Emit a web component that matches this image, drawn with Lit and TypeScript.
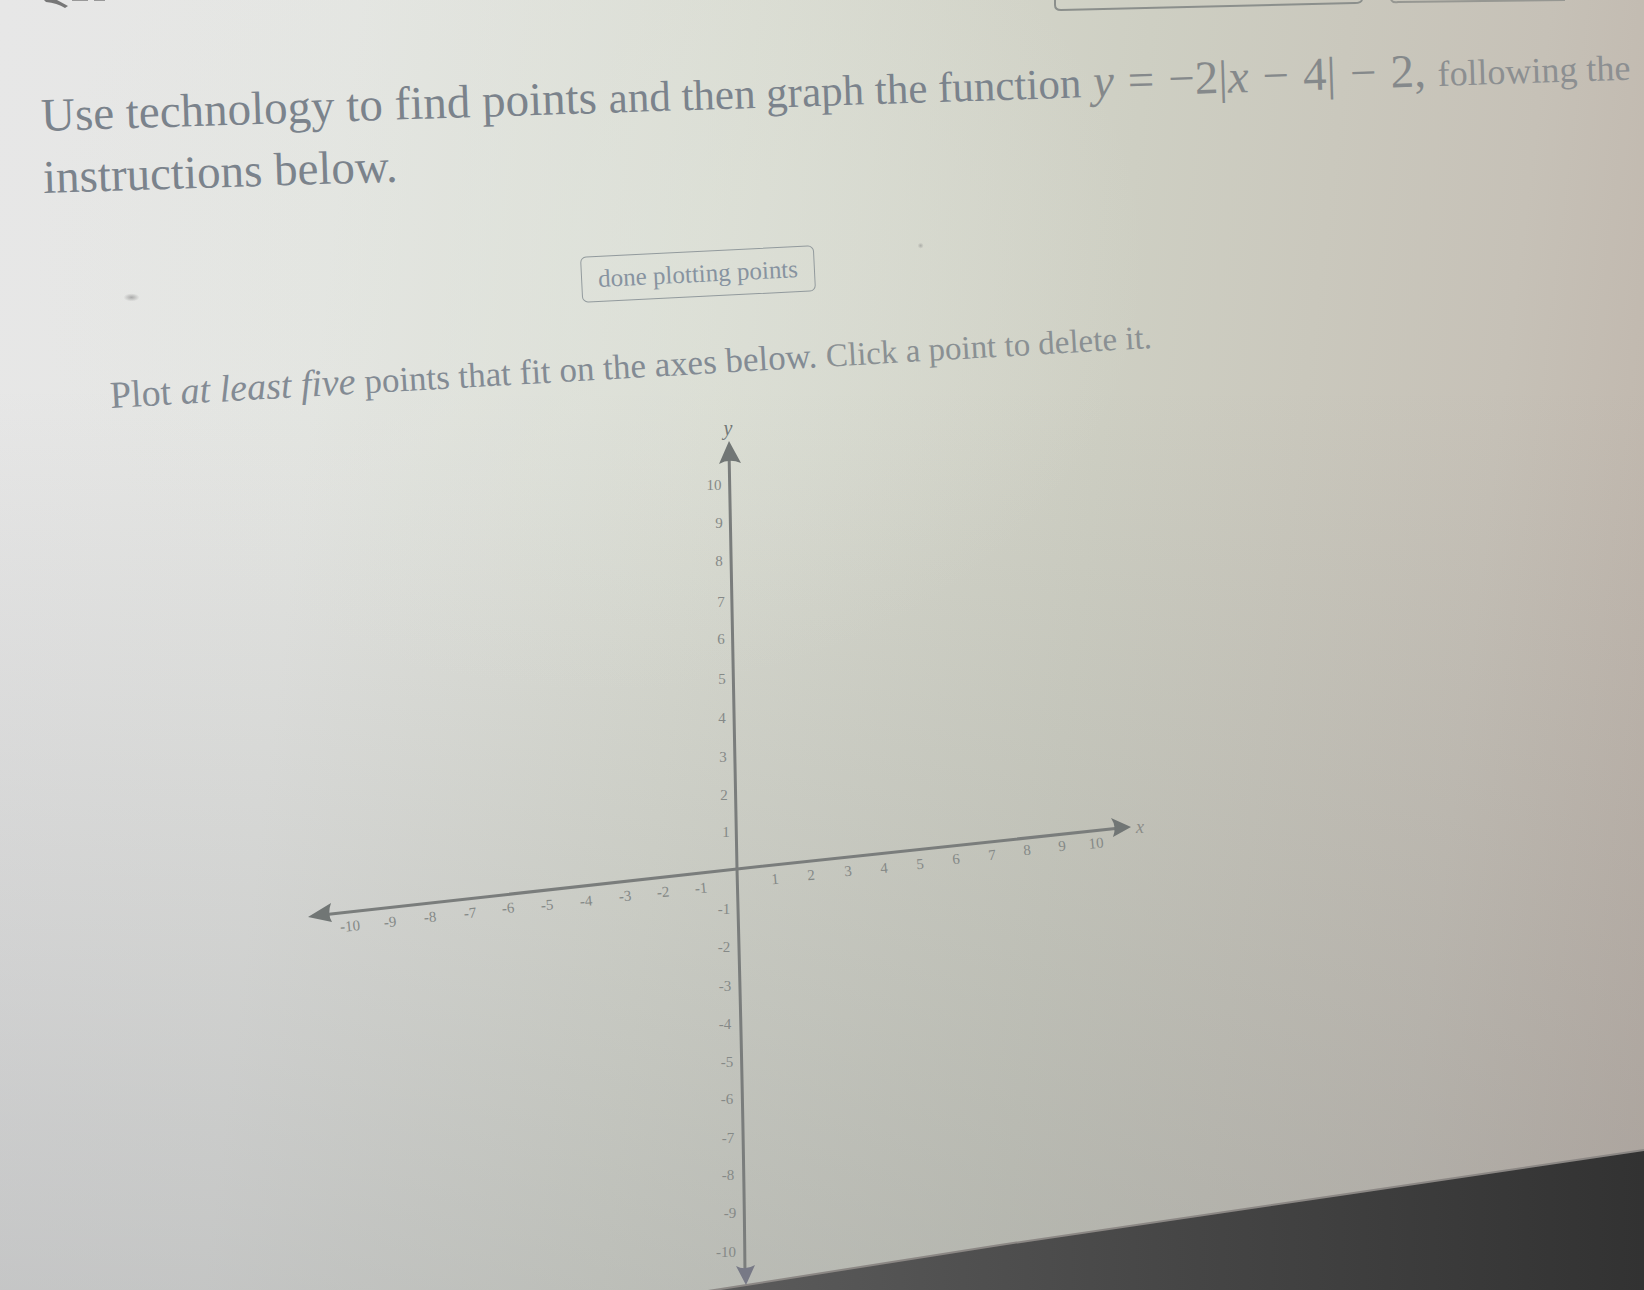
import { LitElement, html, svg, css } from "lit";
import { customElement } from "lit/decorators.js";

type Tick = [label: string, x: number, y: number];

const yTicks: Tick[] = [
  ["10", 714, 485], ["9", 719, 523], ["8", 719, 561], ["7", 721, 602],
  ["6", 721, 639], ["5", 722, 679], ["4", 722, 718], ["3", 723, 757],
  ["2", 724, 795], ["1", 726, 832], ["-1", 724, 909], ["-2", 724, 947],
  ["-3", 725, 986], ["-4", 725, 1024], ["-5", 727, 1062], ["-6", 727, 1099],
  ["-7", 728, 1138], ["-8", 728, 1175], ["-9", 730, 1213], ["-10", 726, 1252],
];

const xTicks: Tick[] = [
  ["-10", 350, 926], ["-9", 390, 922], ["-8", 430, 917], ["-7", 470, 913],
  ["-6", 508, 908], ["-5", 547, 905], ["-4", 586, 901], ["-3", 625, 896],
  ["-2", 663, 892], ["-1", 701, 888], ["1", 775, 879], ["2", 811, 875],
  ["3", 848, 871], ["4", 884, 868], ["5", 920, 864], ["6", 956, 859],
  ["7", 992, 855], ["8", 1027, 850], ["9", 1062, 846], ["10", 1096, 843],
];

@customElement("coordinate-plane")
export class CoordinatePlane extends LitElement {
  static styles = css`
    :host { display: block; }
    .plane { display: block; width: 100%; height: auto; }
    .axis { stroke: #7a7d7c; stroke-width: 3; fill: none; }
    .head { fill: #717675; }
    .head.low { fill: #777986; }
    .tick, .name {
      font-family: Georgia, "Liberation Serif", serif;
      text-anchor: middle;
      fill: #858987;
    }
    .tick { font-size: 15px; }
    .name { font-size: 20px; font-style: italic; fill: #727776; }
    .name.faint { font-size: 18px; fill: #8b8c88; }
  `;

  render() {
    return html`
      <svg class="plane" viewBox="0 415 1644 878" role="img" aria-label="Coordinate axes">
        <defs>
          <linearGradient id="edge" x1="0" x2="1">
            <stop offset="0" stop-color="#5c5c5c" />
            <stop offset="0.5" stop-color="#464646" />
            <stop offset="1" stop-color="#323232" />
          </linearGradient>
        </defs>
        <polygon fill="url(#edge)" points="708,1291 1000,1245 1340,1195 1644,1150 1644,1300 708,1300" />
        <path d="M708 1291L1000 1245L1340 1195L1644 1150" fill="none" stroke="#8b8784" stroke-width="2" />
        <path class="axis" d="M729 450C732 600 735 740 737 869C741 1020 744 1150 745 1275" />
        <path class="axis" d="M322 915L737 869L1120 828" />
        <path class="head" d="M729 441L741 463Q729 458 719 464Z" />
        <path class="head" d="M308 917L331 903Q327 914 332 922Z" />
        <path class="head" d="M1131 827L1111 818Q1117 827 1113 837Z" />
        <path class="head low" d="M746 1285L736 1266Q745 1271 755 1265Z" />
        ${yTicks.map(([t, x, y]) => svg`<text class="tick" x=${x} y=${y + 5}>${t}</text>`)}
        ${xTicks.map(([t, x, y]) => svg`<text class="tick" x=${x} y=${y + 5} transform="rotate(-5 ${x} ${y})">${t}</text>`)}
        <text class="name" x="728" y="435">y</text>
        <text class="name faint" x="1140" y="833">x</text>
      </svg>
    `;
  }
}

@customElement("app-root")
export class AppRoot extends LitElement {
  static styles = css`
    :host {
      display: block;
      min-height: 100vh;
      overflow: hidden;
      font-family: Georgia, "Liberation Serif", serif;
      color: #7b838c;
      background:
        radial-gradient(8px 4px at 8% 23%, rgba(130, 130, 130, 0.6), transparent),
        radial-gradient(3px 3px at 56% 19%, rgba(130, 130, 130, 0.5), transparent),
        radial-gradient(ellipse 34% 34% at 36% 20%, rgba(223, 228, 220, 0.5), transparent),
        linear-gradient(180deg, transparent 30%, rgba(120, 122, 126, 0.3) 100%),
        linear-gradient(97deg, #e7e7e7 0%, #e5e6e3 20%, #dadcd2 42%, #cecfc3 64%, #c6c1b7 86%, #beb3a9 100%);
    }
    .page { display: flex; flex-direction: column; align-items: flex-start; }
    .top { display: block; width: 100%; height: auto; }
    .problem {
      margin: 74px 0 0 42px;
      font-size: 47px;
      font-weight: 400;
      line-height: 58px;
      white-space: nowrap;
      transform: rotate(-1.85deg);
      transform-origin: left center;
    }
    .mid { font-size: 43px; }
    .math { display: inline-flex; align-items: baseline; gap: 14px; color: #85898b; }
    .var { font-style: italic; }
    .tail { font-size: 36px; color: #8c8f91; }
    .done {
      margin: 45px 0 0 581px;
      padding: 0 16px;
      height: 46px;
      border: 1px solid #929a9d;
      border-radius: 6px;
      background: transparent;
      color: #8793a0;
      font: inherit;
      font-size: 25px;
      line-height: 40px;
      white-space: nowrap;
      transform: rotate(-2.8deg);
    }
    .hint {
      margin: 80px 0 0 110px;
      font-size: 35px;
      line-height: 36px;
      color: #838b94;
      white-space: nowrap;
      transform: rotate(-3.3deg);
      transform-origin: left center;
    }
    .near { font-size: 38px; }
    .far { font-size: 33px; color: #8a9093; }
    .plane { width: 100%; }
  `;

  render() {
    return html`
      <main class="page">
        <svg class="top" viewBox="0 0 1644 12" aria-hidden="true">
          <path d="M44 0H57L68 6L65 8Q57 3 46 2Z" fill="#777" />
          <path d="M72 0H88M94 0H105" stroke="#999" stroke-width="2" />
          <path d="M1055 0V5Q1055 10 1061 10L1355 3Q1361 3 1362 0" fill="none" stroke="#8b8f8c" stroke-width="2" />
          <path d="M1391 0Q1393 3 1398 2L1565 0" fill="none" stroke="#969792" stroke-width="2" />
        </svg>
        <h1 class="problem">Use technology to find points <span class="mid">and then graph the function</span>
          <span class="math"><span class="var">y</span><span>=</span><span>−2|<span class="var">x</span></span><span>−</span><span>4|</span><span>−</span><span>2,</span></span>
          <span class="tail">following the</span><br />instructions below.</h1>
        <button class="done" type="button">done plotting points</button>
        <p class="hint"><span class="near">Plot <em>at least five</em></span> points that fit on the axes below. <span class="far">Click a point to delete it.</span></p>
        <coordinate-plane class="plane"></coordinate-plane>
      </main>
    `;
  }
}
